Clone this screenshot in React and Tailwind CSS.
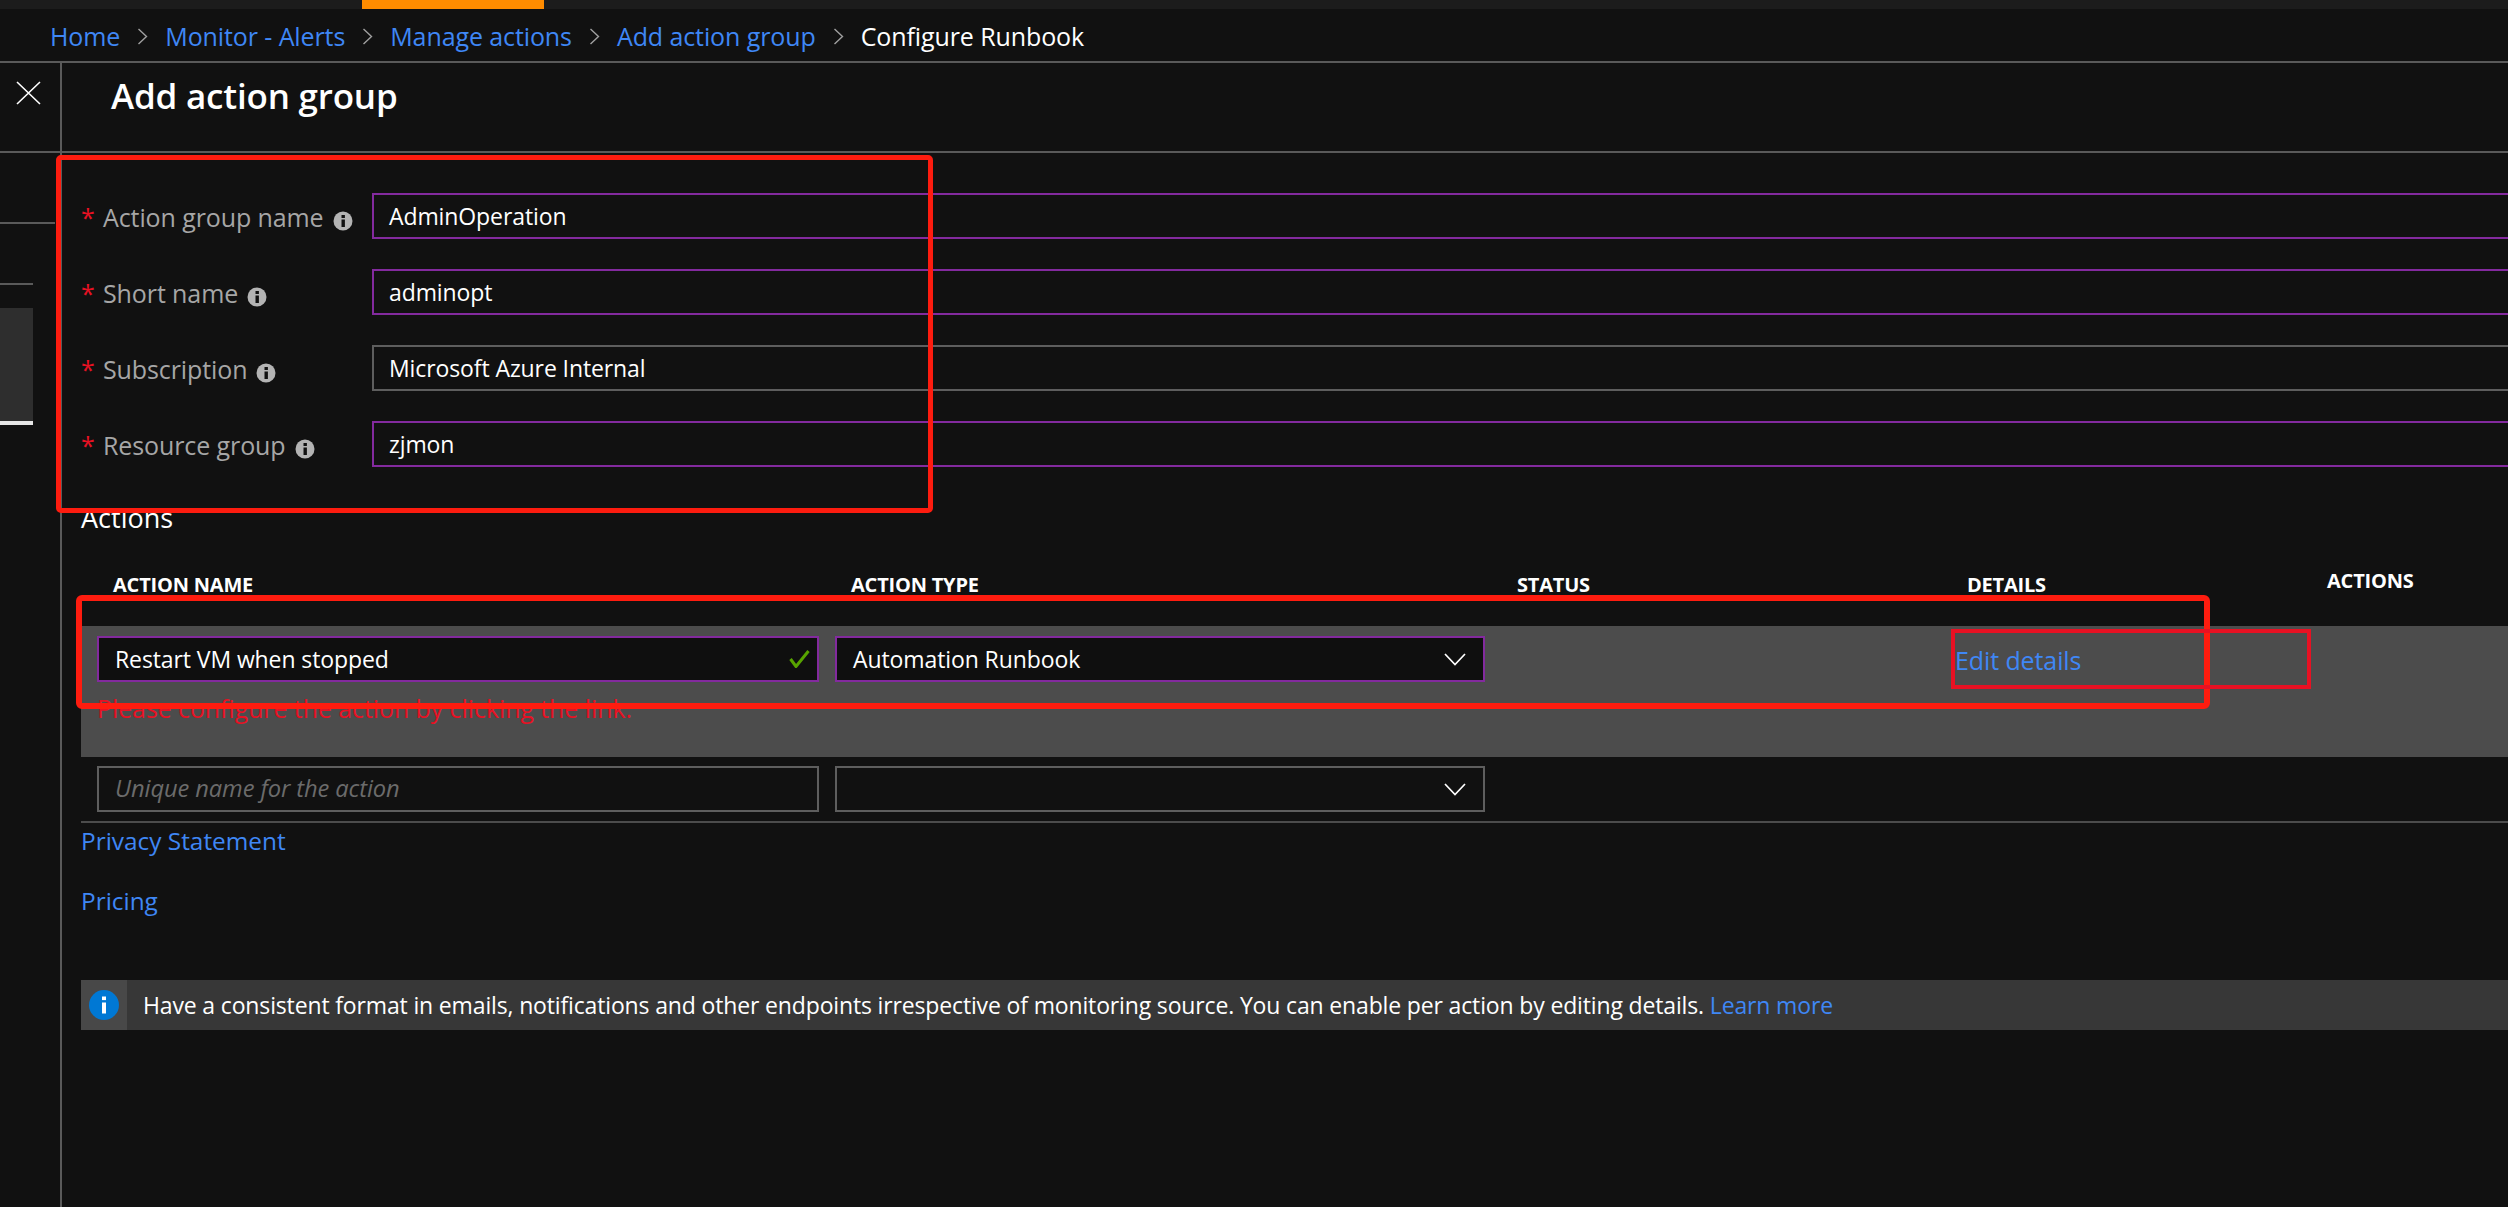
import React from 'react';

const FONT = "font-['Open_Sans','Noto_Sans',sans-serif]";

// thin chevron between breadcrumb items
const CrumbSep = () => (
  <svg width="11" height="17" viewBox="0 0 11 17" fill="none" className="mx-[17px] shrink-0">
    <polyline points="1.5,1 9.5,8.5 1.5,16" stroke="#a0a0a0" strokeWidth="1.4" />
  </svg>
);

const InfoDot = () => (
  <svg width="20" height="20" viewBox="0 0 20 20" className="shrink-0 ml-[9px] mt-[6px]">
    <circle cx="10" cy="10" r="9.5" fill="#b4b4b4" />
    <rect x="8.5" y="8.5" width="3.4" height="7.5" fill="#111111" />
    <rect x="8.5" y="4" width="3.4" height="3" fill="#111111" />
  </svg>
);

const ChevronV = () => (
  <svg width="22" height="13" viewBox="0 0 22 13" fill="none" className="shrink-0">
    <polyline points="1,1 11,11.5 21,1" stroke="#ffffff" strokeWidth="1.7" />
  </svg>
);

const FormRow = ({ label, value, purple = true }) => (
  <div className="flex h-[46px] items-center">
    <div className="w-[291px] shrink-0 flex items-center pt-[4px] text-[25px] text-[#a6a6a6] tracking-[-0.1px]">
      <span className="text-[#e81123] w-[22px]">*</span>
      <span>{label}</span>
      <InfoDot />
    </div>
    <div
      className={`flex-1 -mr-[20px] h-[46px] border-2 flex items-center pl-[15px] text-[23px] text-white tracking-[-0.1px] ${
        purple ? 'border-[#832a9e]' : 'border-[#5e5e5e]'
      }`}
    >
      {value}
    </div>
  </div>
);

const NameInput = ({ purple, children }) => (
  <div
    className={`w-[722px] h-[46px] shrink-0 border-2 flex items-center justify-between pl-[16px] pr-[7px] text-[23px] tracking-[-0.1px] ${
      purple ? 'border-[#832a9e] bg-[#0f0f0f]' : 'border-[#5e5e5e] bg-[#111111]'
    }`}
  >
    {children}
  </div>
);

const TypeSelect = ({ purple, children }) => (
  <div
    className={`w-[650px] h-[46px] shrink-0 ml-[16px] border-2 flex items-center justify-between pl-[16px] pr-[17px] text-[23px] text-white tracking-[-0.1px] ${
      purple ? 'border-[#832a9e] bg-[#0f0f0f]' : 'border-[#5e5e5e] bg-[#111111]'
    }`}
  >
    <span>{children}</span>
    <ChevronV />
  </div>
);

export default function App() {
  return (
    <div className={`relative w-[2508px] h-[1207px] overflow-hidden bg-[#111111] ${FONT}`}>
      {/* portal top strip */}
      <div className="h-[9px] bg-[#1c1c1c]">
        <div className="ml-[362px] w-[182px] h-[9px] bg-[#ff8c00]" />
      </div>

      {/* breadcrumb */}
      <div className="h-[54px] border-b-2 border-[#5a5a5a] flex items-center pl-[50px] pt-[3px] text-[25px] text-[#3f87f5] tracking-[-0.1px]">
        <span>Home</span>
        <CrumbSep />
        <span>Monitor - Alerts</span>
        <CrumbSep />
        <span>Manage actions</span>
        <CrumbSep />
        <span>Add action group</span>
        <CrumbSep />
        <span className="text-white">Configure Runbook</span>
      </div>

      <div className="flex h-[1144px]">
        {/* collapsed left blade */}
        <div className="w-[62px] shrink-0 border-r-2 border-[#5a5a5a]">
          <div className="h-[90px] border-b-2 border-[#5a5a5a] pt-[18px] pl-[16px]">
            <svg width="25" height="24" viewBox="0 0 25 24" fill="none">
              <path d="M1 1 L24 23 M24 1 L1 23" stroke="#ffffff" strokeWidth="1.6" />
            </svg>
          </div>
          <div className="mt-[69px] w-[55px] h-[2px] bg-[#5a5a5a]" />
          <div className="mt-[59px] w-[33px] h-[2px] bg-[#5a5a5a]" />
          <div className="mt-[23px] w-[33px] h-[117px] bg-[#2e2e2e] border-b-4 border-[#e6e6e6]" />
        </div>

        {/* main blade */}
        <div className="flex-1 min-w-0">
          <div className="h-[90px] border-b-2 border-[#5a5a5a] pl-[49px] pt-[9px] text-[35px] leading-[48px] font-semibold text-white tracking-[-0.2px]">
            Add action group
          </div>

          <div className="pl-[19px]">
            <div className="pt-[40px] flex flex-col gap-[30px]">
              <FormRow label="Action group name" value="AdminOperation" />
              <FormRow label="Short name" value="adminopt" />
              <FormRow label="Subscription" value="Microsoft Azure Internal" purple={false} />
              <FormRow label="Resource group" value="zjmon" />
            </div>

            <div className="mt-[35px] text-[27px] leading-[32px] text-white">Actions</div>

            {/* table head */}
            <div className="mt-[39px] h-[24px] flex items-center pl-[32px] text-[20px] font-bold text-white tracking-[-0.2px]">
              <div className="w-[738px]">ACTION NAME</div>
              <div className="w-[666px]">ACTION TYPE</div>
              <div className="w-[450px]">STATUS</div>
              <div className="w-[360px]">DETAILS</div>
              <div className="-mt-[8px]">ACTIONS</div>
            </div>

            {/* configured row */}
            <div className="mt-[29px] h-[131px] bg-[#4c4c4c] pt-[10px] pl-[16px]">
              <div className="flex items-center">
                <NameInput purple>
                  <span className="text-white">Restart VM when stopped</span>
                  <svg width="21" height="18" viewBox="0 0 21 18" fill="none">
                    <path d="M1.5 9 L7 16.5 L19.5 1" stroke="#57a300" strokeWidth="3" />
                  </svg>
                </NameInput>
                <TypeSelect purple>Automation Runbook</TypeSelect>
                <span className="ml-[470px] mt-[4px] text-[25px] text-[#3f87f5] tracking-[-0.1px]">Edit details</span>
              </div>
              <div className="mt-[10px] text-[24.8px] leading-[32px] text-[#e81123]">
                Please configure the action by clicking the link.
              </div>
            </div>

            {/* empty row */}
            <div className="pt-[9px] pl-[16px] h-[66px] border-b-2 border-[#4c4c4c] flex items-start">
              <NameInput>
                <span className="italic text-[23.7px] text-[#6b6b6b]">Unique name for the action</span>
              </NameInput>
              <TypeSelect>{''}</TypeSelect>
            </div>

            <div className="mt-[2px] text-[24.4px] leading-[32px] text-[#3f87f5]">Privacy Statement</div>
            <div className="mt-[28px] text-[24.4px] leading-[32px] text-[#3f87f5]">Pricing</div>

            {/* info banner */}
            <div className="mt-[63px] h-[50px] bg-[#373737] flex items-center text-[23px] text-white tracking-[-0.15px]">
              <div className="w-[46px] h-[50px] bg-[#484848] flex items-center justify-center shrink-0">
                <svg width="30" height="30" viewBox="0 0 30 30">
                  <circle cx="15" cy="15" r="15" fill="#0078d4" />
                  <rect x="13" y="12.5" width="4" height="11" fill="#ffffff" />
                  <rect x="13" y="6.5" width="4" height="3.6" fill="#ffffff" />
                </svg>
              </div>
              <span className="ml-[16px]">
                Have a consistent format in emails, notifications and other endpoints irrespective of monitoring source. You can enable per action by editing details.{' '}
                <span className="text-[#3f87f5]">Learn more</span>
              </span>
            </div>
          </div>
        </div>
      </div>

      {/* hand-drawn red annotations on top of the screenshot */}
      <div className="absolute left-[56px] top-[155px] w-[877px] h-[358px] border-[5px] border-[#fe1c0f] rounded-[5px]" />
      <div className="absolute left-[76px] top-[595px] w-[2134px] h-[114px] border-[6px] border-[#fe1c0f] rounded-[6px]" />
      <div className="absolute left-[1951px] top-[629px] w-[360px] h-[60px] border-[4px] border-[#e81123]" />
    </div>
  );
}
